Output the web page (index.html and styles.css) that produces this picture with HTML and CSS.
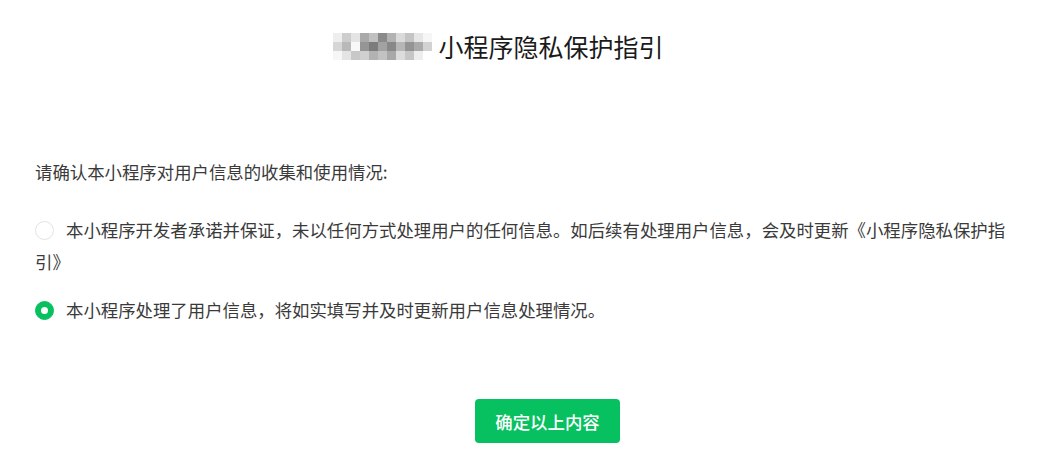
FILE: index.html
```html
<!DOCTYPE html>
<html lang="zh-CN">
<head>
<meta charset="utf-8">
<title>小程序隐私保护指引</title>
<link rel="stylesheet" href="styles.css">
</head>
<body>
<header class="header">
  <div class="title">
    <div class="mosaic">
      <i style="background:#eeeeee"></i><i style="background:#cdcdcd"></i><i style="background:#e4e4e4"></i><i style="background:#a9a9a9"></i><i style="background:#c0c0c0"></i><i style="background:#8a8a8a"></i><i style="background:#b2b2b2"></i><i style="background:#dadada"></i><i style="background:#c4c4c4"></i><i style="background:#e6e6e6"></i><i style="background:#f6f6f6"></i>
      <i style="background:#d6d6d6"></i><i style="background:#b9b9b9"></i><i style="background:#f8f8f8"></i><i style="background:#959595"></i><i style="background:#7c7c7c"></i><i style="background:#a2a2a2"></i><i style="background:#888888"></i><i style="background:#b6b6b6"></i><i style="background:#949494"></i><i style="background:#aaaaaa"></i><i style="background:#d2d2d2"></i>
      <i style="background:#f6f6f6"></i><i style="background:#e4e4e4"></i><i style="background:#c8c8c8"></i><i style="background:#d0d0d0"></i><i style="background:#b2b2b2"></i><i style="background:#c2c2c2"></i><i style="background:#a8a8a8"></i><i style="background:#dcdcdc"></i><i style="background:#c6c6c6"></i><i style="background:#eeeeee"></i><i style="background:#ffffff"></i>
    </div>
    <h1 class="title-text">小程序隐私保护指引</h1>
  </div>
</header>
<main class="content">
  <p class="question">请确认本小程序对用户信息的收集和使用情况:</p>
  <p class="option"><span class="radio"></span>本小程序开发者承诺并保证，未以任何方式处理用户的任何信息。如后续有处理用户信息，会及时更新《小程序隐私保护指引》</p>
  <p class="option option-second"><span class="radio radio-checked"></span>本小程序处理了用户信息，将如实填写并及时更新用户信息处理情况。</p>
  <div class="actions">
    <button class="btn-primary" type="button">确定以上内容</button>
  </div>
</main>
</body>
</html>
```

FILE: styles.css
```css
* { box-sizing: border-box; }
html, body { margin: 0; padding: 0; background: #ffffff; }
body {
  font-family: "Noto Sans CJK SC", "Noto Sans", sans-serif;
  color: #333333;
  width: 1039px;
  height: 456px;
  overflow: hidden;
}
.header {
  height: 100px;
  display: flex;
  justify-content: center;
  padding-right: 42px;
  padding-top: 31px;
}
.title {
  display: flex;
  align-items: center;
  height: 30px;
}
.mosaic {
  display: grid;
  grid-template-columns: repeat(11, 9px);
  grid-auto-rows: 9px;
  width: 99px;
  margin-right: 6px;
  filter: blur(0.5px);
}
.mosaic i { display: block; }
.title-text {
  margin: 0;
  font-size: 25px;
  font-weight: 400;
  color: #1a1a1a;
  line-height: 30px;
  letter-spacing: 0;
}
.content {
  padding: 56px 27px 0 35px;
  font-size: 17.4px;
}
.question {
  margin: 0;
  line-height: 32px;
  color: #3a3a3a;
}
.option {
  margin: 26px 0 0;
  line-height: 32px;
  color: #3a3a3a;
}
.option-second { margin-top: 16px; }
.radio {
  display: inline-block;
  width: 19px;
  height: 19px;
  border-radius: 50%;
  border: 1px solid #e3e3e3;
  background: #ffffff;
  margin-right: 12px;
  vertical-align: -3px;
  position: relative;
}
.radio-checked {
  border-color: #07c160;
  background: #07c160;
}
.radio-checked::after {
  content: "";
  position: absolute;
  left: 50%;
  top: 50%;
  width: 7px;
  height: 7px;
  margin: -3.5px 0 0 -3.5px;
  border-radius: 50%;
  background: #ffffff;
}
.actions {
  display: flex;
  justify-content: center;
  padding-left: 48px;
  margin-top: 73px;
}
.btn-primary {
  width: 145px;
  height: 44px;
  border: none;
  border-radius: 4px;
  background: #07c160;
  color: #ffffff;
  font-family: "Noto Sans CJK SC", "Noto Sans", sans-serif;
  font-size: 17.4px;
  font-weight: 500;
  cursor: pointer;
}
```
